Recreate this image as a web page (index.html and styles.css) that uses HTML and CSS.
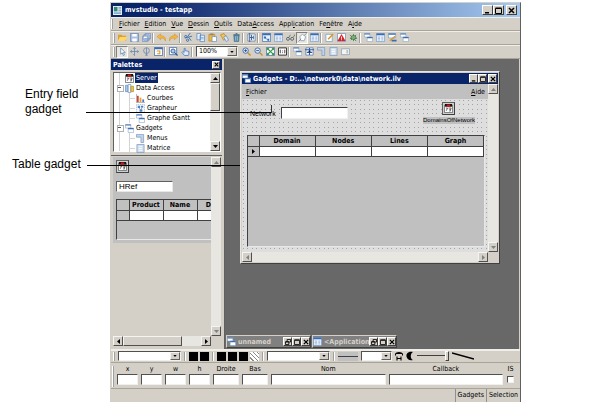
FILE: index.html
```html
<!DOCTYPE html>
<html lang="fr">
<head>
  <meta charset="UTF-8">
  <meta name="viewport" content="width=device-width, initial-scale=1.0">
  <title>mvstudio - testapp</title>
  <link rel="stylesheet" href="styles.css">
</head>
<body>

<!-- shared icons -->
<svg class="sprite" width="0" height="0" aria-hidden="true">
  <symbol id="up" viewBox="0 0 5 3"><path d="M0 3h5L2.500 0z"/></symbol>
  <symbol id="down" viewBox="0 0 5 3"><path d="M0 0h5L2.500 3z"/></symbol>
  <symbol id="left" viewBox="0 0 3 5"><path d="M3 0v5L0 2.500z"/></symbol>
  <symbol id="right" viewBox="0 0 3 5"><path d="M0 0v5l3-2.500z"/></symbol>
  <symbol id="min" viewBox="0 0 7 7"><path d="M1 5h4v1.500H1z"/></symbol>
  <symbol id="max" viewBox="0 0 7 7"><path fill="none" stroke="currentColor" d="M.5 1.500h6v5h-6zM.5 1h6"/></symbol>
  <symbol id="restore" viewBox="0 0 7 7"><path fill="none" stroke="currentColor" d="M2.500 2.500v-2h4v3h-2M.5 3.500h4v3h-4zM.5 3h4"/></symbol>
  <symbol id="close" viewBox="0 0 7 7"><path fill="none" stroke="currentColor" stroke-width="1.500" d="M1 1l5 5M6 1L1 6"/></symbol>
  <symbol id="form" viewBox="0 0 10 10"><path fill="#fff" stroke="#7d9cc4" stroke-width=".6" d="M.5.500h6v4h-6zM3.500 4.500h6v5h-6z"/><path fill="#3a6cb4" d="M.5.500h6v1.300h-6zM3.500 4.500h6v1.400h-6z"/></symbol>
  <symbol id="table" viewBox="0 0 10 10"><path fill="#e8f0fa" stroke="#6a94c8" stroke-width=".7" d="M.5.500h9v9h-9z"/><path fill="#3a6cb4" d="M.5.500h9v2h-9z"/><path stroke="#6a94c8" stroke-width=".6" d="M2 4.500h2.500M2 6h2.500M2 7.700h2.500M6 4.500h2M6 6h2M6 7.700h2"/></symbol>
  <symbol id="calendar" viewBox="0 0 10 10"><path fill="#fff" stroke="#555" stroke-width=".8" d="M.5 1.500h9v8h-9z"/><path fill="#111" d="M1 0h8v3H1z"/><path fill="#d01818" d="M3 .5h4V3H3z"/><path fill="none" stroke="#333" stroke-width=".8" d="M2 4.500h2l-1.500 3M5 4.500h3L6.500 8.500M5.500 6.500h2"/></symbol>
  <symbol id="folder" viewBox="0 0 10 10"><path fill="#e0a030" d="M0 2h4l1 1h4v6H0z"/><path fill="#ffd86a" d="M2 4.500h8L8 9H0z"/></symbol>
  <symbol id="save" viewBox="0 0 10 10"><path fill="#a8c0e4" stroke="#6484b8" stroke-width=".8" d="M.5.500h9v9h-9z"/><path fill="#fff" d="M2.500 1h5v3h-5zM2.500 6h5v3.500h-5z"/></symbol>
  <symbol id="saveall" viewBox="0 0 10 10"><path fill="#c8d8f0" stroke="#6484b8" stroke-width=".7" d="M3.500.500h6v6h-6zM2 2h6v6H2zM.5 3.500h6v6h-6z"/><path fill="#fff" d="M2 4h3v1.500H2z"/></symbol>
  <symbol id="undo" viewBox="0 0 10 10"><path fill="#f4b840" stroke="#c88820" stroke-width=".5" d="M0 4l4-3v2c4 0 6 2 5.500 6C8.500 6.500 7 5.500 4 5.500v2z"/></symbol>
  <symbol id="redo" viewBox="0 0 10 10"><path fill="#f4b840" stroke="#c88820" stroke-width=".5" d="M10 4L6 1v2C2 3 0 5 .5 9 1.500 6.500 3 5.500 6 5.500v2z"/></symbol>
  <symbol id="cut" viewBox="0 0 10 10"><path fill="none" stroke="#3c6cac" d="M1 5.500l8-2M4 4l3-4M5 4.500l3 4"/><circle cx="2" cy="4" r="1.300" fill="none" stroke="#3c6cac"/><circle cx="4" cy="8" r="1.300" fill="none" stroke="#3c6cac"/></symbol>
  <symbol id="copy" viewBox="0 0 10 10"><path fill="#e4eefa" stroke="#5884bc" stroke-width=".8" d="M1 .5h4v7H1zM4.500 2.500h5v7h-5z"/><path stroke="#5884bc" stroke-width=".6" d="M5.500 5h3M5.500 6.500h3"/></symbol>
  <symbol id="paste" viewBox="0 0 10 10"><path fill="#f0b840" stroke="#a07420" stroke-width=".6" d="M1 1.500h6.500v7.500H1z"/><path fill="#888" d="M2.500.500h3.500v2H2.500z"/><path fill="#fff" stroke="#5884bc" stroke-width=".7" d="M4.500 4h5v5.500h-5z"/></symbol>
  <symbol id="dup" viewBox="0 0 10 10"><path fill="#f4c450" stroke="#a07420" stroke-width=".6" d="M.5 2l4-1.500L8 6 4 8z"/><path fill="#dce8f8" stroke="#5884bc" stroke-width=".7" d="M4 4.500l3-1.500 2.500 5L7 9.500z"/></symbol>
  <symbol id="trash" viewBox="0 0 10 10"><path fill="#5c8ca8" stroke="#34647c" stroke-width=".6" d="M2 2.500h6L7.500 9.500h-5z"/><path stroke="#34647c" d="M1.500 2h7M4 .7h2"/><path stroke="#c8e0ec" stroke-width=".6" d="M4 3.500v5M6 3.500v5"/></symbol>
  <symbol id="tune" viewBox="0 0 10 10"><path fill="#f8f8f8" stroke="#5878a0" stroke-width=".8" d="M1 1h8v8H1z"/><path stroke="#345c94" d="M3 0v10M5 2v6M7 3v4M3 5h4"/></symbol>
  <symbol id="glasses" viewBox="0 0 10 10"><path fill="none" stroke="#666" stroke-width=".9" d="M3 5l2-3M8 5l2-3.500M4 6.500h1"/><circle cx="2.200" cy="6.500" r="1.600" fill="#d0e4ec" stroke="#555"/><circle cx="6.800" cy="6.500" r="1.600" fill="#d0e4ec" stroke="#555"/></symbol>
  <symbol id="edit" viewBox="0 0 10 10"><path fill="#fff" stroke="#7898c0" stroke-width=".8" d="M1 1.500h7v8H1z"/><path stroke="#d89820" stroke-width="1.600" d="M3.500 7l5.500-6"/></symbol>
  <symbol id="lasso" viewBox="0 0 10 10"><path fill="#fff" stroke="#8898a8" stroke-width=".9" d="M2 4l3-2.500L8.500 4 7 8.500H3z"/><path stroke="#6080a8" stroke-width=".9" d="M.5 9.500l3-3M7 2.500L9.500.500"/></symbol>
  <symbol id="warn" viewBox="0 0 10 10"><path fill="#fff" stroke="#6888b8" stroke-width=".8" d="M.5.500h9v9h-9z"/><path fill="#e02020" d="M5 1l4.500 8h-9z"/><path stroke="#fff" d="M5 4v2.500M5 7v1"/></symbol>
  <symbol id="bug" viewBox="0 0 10 10"><path stroke="#346c34" stroke-width=".8" d="M1 2l7 7M1 6h8M5 1v8M2 8l6-6"/><ellipse cx="5" cy="5" rx="2.800" ry="2.200" fill="#78b078" stroke="#286028" stroke-width=".6"/></symbol>
  <symbol id="pointer" viewBox="0 0 10 10"><path fill="#fff" stroke="#6080a8" stroke-width=".8" d="M3 1v7l1.700-1.500L6 9.500l1.200-.6-1.300-2.700H8z"/></symbol>
  <symbol id="move" viewBox="0 0 10 10"><path fill="none" stroke="#6888b0" stroke-width=".9" d="M5 .5v9M3.500 2L5 .5 6.500 2M.5 5h9M2 3.500L.5 5 2 6.500M8 3.500L9.500 5 8 6.500M3.500 8L5 9.500"/></symbol>
  <symbol id="rotate" viewBox="0 0 10 10"><path fill="none" stroke="#6888b0" stroke-width=".9" d="M5 1v8.500M3.500 9h3"/><circle cx="5" cy="4" r="3.200" fill="none" stroke="#6888b0" stroke-width=".9"/></symbol>
  <symbol id="swap" viewBox="0 0 10 10"><path fill="#fff" stroke="#4870a8" stroke-width=".9" d="M.5.500h9v9h-9z"/><path fill="#3a6cb4" d="M.5.500h9v2h-9z"/><path stroke="#d89820" stroke-width="1.200" fill="none" d="M3 4.500h3.500v3H3.500"/></symbol>
  <symbol id="formedit" viewBox="0 0 10 10"><path fill="#fff" stroke="#6a94c8" stroke-width=".7" d="M.5.500h8v5h-8z"/><path fill="#3a6cb4" d="M.5.500h8v1.500h-8zM4 7.500h5.500v2H4z"/><path stroke="#d89820" stroke-width="1.500" d="M2 8.500l6-5"/></symbol>
  <symbol id="zoomsel" viewBox="0 0 10 10"><path fill="#fff" stroke="#4870a8" stroke-width=".9" d="M.5.500h8v8h-8z"/><circle cx="4.500" cy="4.500" r="2.300" fill="#a8ccf0" stroke="#3058a0"/><path stroke="#3058a0" stroke-width="1.400" d="M6 6l3.500 3.500"/></symbol>
  <symbol id="hand" viewBox="0 0 10 10"><path fill="#dceafa" stroke="#3c6cb4" stroke-width=".8" d="M4 9.500L1 6l.8-.8L3.500 6V1.500h1.200V4l4 1v3L8 9.500z"/></symbol>
  <symbol id="zoomin" viewBox="0 0 10 10"><circle cx="4" cy="4" r="3" fill="#e0ecfa" stroke="#3c64a8"/><path stroke="#c89030" stroke-width="1.600" d="M6.500 6.500l3 3"/><path stroke="#24488c" d="M2.500 4h3M4 2.500v3"/></symbol>
  <symbol id="zoomout" viewBox="0 0 10 10"><circle cx="4" cy="4" r="3" fill="#e0ecfa" stroke="#3c64a8"/><path stroke="#c89030" stroke-width="1.600" d="M6.500 6.500l3 3"/><path stroke="#24488c" d="M2.500 4h3"/></symbol>
  <symbol id="fit" viewBox="0 0 10 10"><path fill="#fff" stroke="#3c64a8" stroke-width=".8" d="M.5.500h9v9h-9z"/><path stroke="#309848" stroke-width="1.300" d="M2 2l6 6M8 2L2 8"/><path fill="#309848" d="M1 1h3L1 4zM9 1v3L6 1zM1 9V6l3 3zM9 9H6l3-3z"/></symbol>
  <symbol id="one" viewBox="0 0 10 10"><path fill="#fff" stroke="#222" d="M.5 1h9v8h-9z"/><path stroke="#222" stroke-width=".9" d="M2.500 3v4M7.500 3v4M5 4v.8M5 6v.8"/></symbol>
  <symbol id="guides" viewBox="0 0 10 10"><path fill="#fff" stroke="#4870a8" stroke-width=".8" d="M1 1h8v8H1z"/><path stroke="#2c5ca8" stroke-width="1.200" d="M0 3h10M5 1v8M2 6h6"/><path fill="#222" d="M4 4h2v2H4z"/></symbol>
  <symbol id="corner" viewBox="0 0 10 10"><path fill="#c4d4e8" stroke="#7090b8" stroke-width=".7" d="M.5.500h8v9h-3v-6h-5z"/></symbol>
  <symbol id="grid" viewBox="0 0 10 10"><path fill="#d0dcec" stroke="#7898c0" stroke-width=".8" d="M1 .5h8v9H1z"/><path stroke="#fff" d="M3 3h4M3 5h4M3 7h4"/></symbol>
  <symbol id="panel" viewBox="0 0 10 10"><path fill="#f4f4f4" stroke="#8898b0" stroke-width=".8" d="M.5 2h9v6.500h-9z"/><path fill="#68a070" d="M6 4h2v1H6zM6 6h2v1H6z"/></symbol>
  <symbol id="chart" viewBox="0 0 10 10"><path fill="#d84030" d="M1 2h2v7H1z"/><path fill="#f0a030" d="M4 4h2v5H4z"/><path fill="#4878c8" d="M7 6h2v3H7z"/><path fill="none" stroke="#889" stroke-width=".7" d="M.5 0v9.500H10"/></symbol>
  <symbol id="graph" viewBox="0 0 10 10"><path fill="#f4f8fe" stroke="#7898c0" stroke-width=".7" stroke-dasharray="1" d="M.5.500h9v9h-9z"/><path fill="#4c80c0" d="M2 2h2.500v2.500H2zM5.500 2H8v2H5.500zM4 6h3v2.500H4z"/><path fill="none" stroke="#4c80c0" stroke-width=".7" d="M3 4l2.500 3L7 3"/></symbol>
  <symbol id="graphwin" viewBox="0 0 10 10"><path fill="#e8f0fa" stroke="#3a6cb4" stroke-width=".8" d="M.5.500h9v9h-9z"/><path fill="#3a6cb4" d="M.5.500h9v2h-9zM2 4h2.500v2H2zM6 6.500h2v2H6z"/><path fill="none" stroke="#3a6cb4" stroke-width=".7" d="M3 5l4 3"/></symbol>
  <symbol id="db" viewBox="0 0 10 10"><path fill="#a8c8e8" stroke="#5884bc" stroke-width=".7" d="M.5 1.500h3v7h-3z"/><path fill="#f8fcff" stroke="#5884bc" stroke-width=".7" d="M3.500.500h3v9h-3z"/><path fill="#e8c050" stroke="#a88428" stroke-width=".7" d="M6.500 2.500h3v6h-3z"/></symbol>
</svg>

<div class="figure">

  <div class="notes">
    <p class="note note-entry">Entry field<br>gadget</p>
    <p class="note note-table">Table gadget</p>
  </div>

  <div class="app">
    <div class="titlebar">
      <svg class="app-icon" viewBox="0 0 10 10"><path fill="#e8f0f0" d="M0 0h10v10H0z"/><path fill="#308878" d="M1 1h4v5H1z"/><path fill="#88b0d0" d="M6 1h3v2H6zM6 4h3v2H6zM1 7h8v2H1z"/></svg>
      <h1>mvstudio - testapp</h1>
      <div class="win-buttons">
        <button class="cap"><svg><use href="#min"/></svg></button>
        <button class="cap"><svg><use href="#max"/></svg></button>
        <button class="cap cap-close"><svg><use href="#close"/></svg></button>
      </div>
    </div>

    <nav class="menubar">
      <span class="grip"></span>
      <button><u>F</u>ichier</button>
      <button><u>E</u>dition</button>
      <button><u>V</u>ue</button>
      <button><u>D</u>essin</button>
      <button><u>O</u>utils</button>
      <button>Data<u>A</u>ccess</button>
      <button>Appl<u>i</u>cation</button>
      <button>Fe<u>n</u>être</button>
      <button>A<u>i</u>de</button>
    </nav>

    <div class="toolbar">
      <span class="grip"></span>
      <button class="tool"><svg><use href="#folder"/></svg></button>
      <button class="tool"><svg><use href="#save"/></svg></button>
      <button class="tool"><svg><use href="#saveall"/></svg></button>
      <span class="sep"></span>
      <button class="tool"><svg><use href="#undo"/></svg></button>
      <button class="tool"><svg><use href="#redo"/></svg></button>
      <span class="sep"></span>
      <button class="tool"><svg><use href="#cut"/></svg></button>
      <button class="tool"><svg><use href="#copy"/></svg></button>
      <button class="tool"><svg><use href="#paste"/></svg></button>
      <button class="tool"><svg><use href="#dup"/></svg></button>
      <button class="tool"><svg><use href="#trash"/></svg></button>
      <span class="sep"></span>
      <button class="tool"><svg><use href="#tune"/></svg></button>
      <span class="sep"></span>
      <button class="tool"><svg><use href="#graphwin"/></svg></button>
      <button class="tool"><svg><use href="#table"/></svg></button>
      <button class="tool"><svg><use href="#glasses"/></svg></button>
      <button class="tool pressed"><svg><use href="#lasso"/></svg></button>
      <button class="tool"><svg><use href="#table"/></svg></button>
      <span class="sep"></span>
      <button class="tool"><svg><use href="#edit"/></svg></button>
      <button class="tool"><svg><use href="#warn"/></svg></button>
      <button class="tool"><svg><use href="#bug"/></svg></button>
      <span class="sep"></span>
      <button class="tool"><svg><use href="#form"/></svg></button>
      <button class="tool"><svg><use href="#table"/></svg></button>
      <button class="tool"><svg><use href="#formedit"/></svg></button>
      <button class="tool"><svg><use href="#form"/></svg></button>
    </div>

    <div class="toolbar">
      <span class="grip"></span>
      <button class="tool pressed"><svg><use href="#pointer"/></svg></button>
      <button class="tool"><svg><use href="#move"/></svg></button>
      <button class="tool"><svg><use href="#rotate"/></svg></button>
      <button class="tool"><svg><use href="#swap"/></svg></button>
      <span class="sep"></span>
      <button class="tool"><svg><use href="#zoomsel"/></svg></button>
      <button class="tool"><svg><use href="#hand"/></svg></button>
      <span class="sep"></span>
      <span class="combo combo-zoom">
        <select aria-label="Zoom"><option>100%</option></select>
        <span class="drop"><svg><use href="#down"/></svg></span>
      </span>
      <button class="tool"><svg><use href="#zoomin"/></svg></button>
      <button class="tool"><svg><use href="#zoomout"/></svg></button>
      <button class="tool"><svg><use href="#fit"/></svg></button>
      <button class="tool"><svg><use href="#one"/></svg></button>
      <span class="sep"></span>
      <button class="tool"><svg><use href="#form"/></svg></button>
      <button class="tool"><svg><use href="#guides"/></svg></button>
      <button class="tool"><svg><use href="#corner"/></svg></button>
      <button class="tool"><svg><use href="#grid"/></svg></button>
      <button class="tool"><svg><use href="#panel"/></svg></button>
    </div>

    <div class="main">
      <div class="palettes">
        <div class="palettes-head">
          <h2>Palettes</h2>
          <button class="cap cap-small"><svg><use href="#close"/></svg></button>
        </div>

        <div class="tree-box">
          <ul class="tree">
            <li><svg class="node"><use href="#calendar"/></svg><span class="selected">Server</span></li>
            <li class="open"><svg class="node"><use href="#db"/></svg><span>Data Access</span></li>
            <li class="child"><svg class="node"><use href="#chart"/></svg><span>Courbes</span></li>
            <li class="child"><svg class="node"><use href="#graph"/></svg><span>Grapheur</span></li>
            <li class="child"><svg class="node"><use href="#form"/></svg><span>Graphe Gantt</span></li>
            <li class="open"><svg class="node"><use href="#form"/></svg><span>Gadgets</span></li>
            <li class="child"><svg class="node"><use href="#corner"/></svg><span>Menus</span></li>
            <li class="child"><svg class="node"><use href="#grid"/></svg><span>Matrice</span></li>
          </ul>
          <div class="vscroll">
            <button class="arrow"><svg class="vert"><use href="#up"/></svg></button>
            <span class="thumb"></span>
            <span class="track"></span>
            <button class="arrow"><svg class="vert"><use href="#down"/></svg></button>
          </div>
        </div>

        <div class="preview">
          <div class="preview-view">
            <div class="preview-page">
              <button class="gadget"><svg><use href="#calendar"/></svg></button>
              <input class="href" type="text" value="HRef" aria-label="HRef">
              <div class="grid-box">
                <table class="grid">
                  <tr><th class="col-head"></th><th class="col-name">Product</th><th class="col-name">Name</th><th class="col-last">D</th></tr>
                  <tr><th></th><td></td><td></td><td></td></tr>
                </table>
              </div>
            </div>
          </div>
          <div class="vscroll disabled">
            <button class="arrow"><svg class="vert"><use href="#up"/></svg></button>
            <span class="track"></span>
            <button class="arrow"><svg class="vert"><use href="#down"/></svg></button>
          </div>
          <div class="hscroll">
            <button class="arrow"><svg class="horiz"><use href="#left"/></svg></button>
            <span class="thumb"></span>
            <span class="track"></span>
            <button class="arrow"><svg class="horiz"><use href="#right"/></svg></button>
          </div>
        </div>
      </div>

      <div class="desktop">
        <div class="child-window">
          <div class="child-title">
            <svg class="node"><use href="#form"/></svg>
            <h2>Gadgets - D:...\network0\data\network.ilv</h2>
            <div class="win-buttons">
              <button class="cap cap-child"><svg><use href="#min"/></svg></button>
              <button class="cap cap-child"><svg><use href="#max"/></svg></button>
              <button class="cap cap-child cap-close"><svg><use href="#close"/></svg></button>
            </div>
          </div>
          <div class="child-body">
            <div class="child-view">
              <div class="child-menu">
                <button><u>F</u>ichier</button>
                <button><u>A</u>ide</button>
              </div>
              <div class="canvas">
                <div class="canvas-row">
                  <label for="network">Network</label>
                  <input id="network" type="text">
                  <div class="domains">
                    <button class="gadget"><svg><use href="#calendar"/></svg></button>
                    <span>DomainsOfNetwork</span>
                  </div>
                </div>
                <div class="grid-box canvas-grid">
                  <table class="grid">
                    <tr><th class="row-head"></th><th>Domain</th><th>Nodes</th><th>Lines</th><th>Graph</th></tr>
                    <tr><th class="row-head"><svg class="marker"><use href="#right"/></svg></th><td></td><td></td><td></td><td></td></tr>
                  </table>
                </div>
              </div>
            </div>
            <div class="vscroll disabled">
              <button class="arrow"><svg class="vert"><use href="#up"/></svg></button>
              <span class="track"></span>
              <button class="arrow"><svg class="vert"><use href="#down"/></svg></button>
            </div>
            <div class="hscroll disabled">
              <button class="arrow"><svg class="horiz"><use href="#left"/></svg></button>
              <span class="track"></span>
              <button class="arrow"><svg class="horiz"><use href="#right"/></svg></button>
            </div>
          </div>
        </div>

        <div class="minimized">
          <div class="mini">
            <svg class="node"><use href="#form"/></svg>
            <span class="mini-name">unnamed</span>
            <button class="cap cap-child"><svg><use href="#restore"/></svg></button>
            <button class="cap cap-child"><svg><use href="#max"/></svg></button>
            <button class="cap cap-child"><svg><use href="#close"/></svg></button>
          </div>
          <div class="mini">
            <svg class="node"><use href="#table"/></svg>
            <span class="mini-name">&lt;Application</span>
            <button class="cap cap-child"><svg><use href="#restore"/></svg></button>
            <button class="cap cap-child"><svg><use href="#max"/></svg></button>
            <button class="cap cap-child"><svg><use href="#close"/></svg></button>
          </div>
        </div>
      </div>
    </div>

    <!-- graphic attributes -->
    <div class="toolbar attributes">
      <span class="grip"></span>
      <span class="combo combo-wide">
        <select aria-label="Police"><option></option></select>
        <span class="drop"><svg><use href="#down"/></svg></span>
      </span>
      <span class="sep"></span>
      <div class="swatches">
        <button class="swatch"></button>
        <button class="swatch"></button>
      </div>
      <span class="sep"></span>
      <div class="swatches">
        <button class="swatch"></button>
        <button class="swatch"></button>
        <button class="swatch"></button>
        <button class="swatch hatch"></button>
      </div>
      <span class="sep"></span>
      <span class="combo combo-wide">
        <select aria-label="Motif"><option></option></select>
        <span class="drop"><svg><use href="#down"/></svg></span>
      </span>
      <span class="sep"></span>
      <button class="line-style"></button>
      <span class="combo combo-short">
        <select aria-label="Trait"><option></option></select>
        <span class="drop"><svg><use href="#down"/></svg></span>
      </span>
      <svg class="shape" viewBox="0 0 8 10"><path fill="none" stroke="#000" stroke-width="1.100" d="M.5 4.500V3C1.500 1 6.500 1 7.500 3v1.500M1 2.500h6M2 9.500V5.500M6 9.500V5.500M2 7.500h4"/></svg>
      <svg class="shape" viewBox="0 0 8 10"><path d="M7 1C2 0 0 3 .5 5.500 1 8.500 4 10 7 9 4 8 4 2.500 7 1z"/></svg>
      <input class="slider" type="range" value="100" aria-label="Alpha">
      <svg class="stroke" viewBox="0 0 22 10"><path stroke="#000" stroke-width="1.500" d="M0 2l22 6"/></svg>
    </div>

    <div class="props">
      <span class="grip"></span>
      <label class="num">x<input type="text"></label>
      <label class="num">y<input type="text"></label>
      <label class="num">w<input type="text"></label>
      <label class="num">h<input type="text"></label>
      <label class="side">Droite<input type="text"></label>
      <label class="side">Bas<input type="text"></label>
      <label class="long">Nom<input type="text"></label>
      <label class="long">Callback<input type="text"></label>
      <label class="check">IS<input type="checkbox"></label>
    </div>

    <div class="status">
      <span>Gadgets</span>
      <span>Selection</span>
    </div>
  </div>
</div>

</body>
</html>
```
FILE: styles.css
```css
* {
  margin: 0;
  padding: 0;
  box-sizing: border-box;
}
body {
  background: #fff;
  color: #000;
  font-family: "DejaVu Sans Condensed", "DejaVu Sans", sans-serif;
  font-size: 7px;
  line-height: 10px;
}
button, input, select {
  font: inherit;
  color: inherit;
  border: 0;
  border-radius: 0;
  background: none;
  min-width: 0;
  appearance: none;
}
svg {
  display: block;
  flex: none;
  fill: currentColor;
}
.sprite {
  position: absolute;
}
u {
  text-underline-offset: 1px;
  text-decoration-thickness: 1px;
}
h1, h2 {
  font-size: 7px;
  line-height: 10px;
  font-weight: bold;
  white-space: nowrap;
}
.figure {
  display: flex;
  min-height: 100vh;
  padding: 2px 83px 0 0;
}

/* captions on the left, with their leader lines */
.notes {
  flex: none;
  width: 110px;
  padding-top: 85px;
  font-family: "Liberation Sans", Arial, sans-serif;
  font-size: 12px;
  line-height: 15px;
}
.note {
  position: relative;
}
.note::after {
  content: "";
  position: absolute;
  z-index: 5;
  height: 1px;
  background: #000;
}
.note-entry {
  padding-left: 25px;
}
.note-entry::before {
  content: "";
  position: absolute;
  z-index: 5;
  left: 271px;
  top: 18px;
  width: 1px;
  height: 8px;
  background: #333;
}
.note-entry::after {
  left: 86px;
  top: 25px;
  width: 185px;
}
.note-table {
  margin-top: 40px;
  padding-left: 12px;
}
.note-table::after {
  left: 87px;
  top: 8px;
  width: 153px;
}

.app {
  flex: 1;
  min-width: 0;
  display: flex;
  flex-direction: column;
  background: #d4d0c8;
  border: 1px solid #d4d0c8;
  border-right-color: #606060;
  border-bottom: 0;
}
.titlebar {
  display: flex;
  align-items: center;
  gap: 3px;
  height: 14px;
  padding: 0 3px 0 2px;
  color: #fff;
  background: linear-gradient(90deg, #0a246a 10%, #a6caf0);
}
.app-icon {
  width: 9px;
  height: 9px;
}
.win-buttons {
  display: flex;
  margin-left: auto;
}
.cap {
  display: flex;
  align-items: center;
  justify-content: center;
  flex: none;
  width: 11px;
  height: 10px;
  color: #000;
  background: #d4d0c8;
  border: 1px solid;
  border-color: #fff #404040 #404040 #fff;
}
.cap svg {
  width: 7px;
  height: 7px;
}
.cap-close {
  margin-left: 2px;
}
.cap-small {
  width: 8px;
  height: 8px;
}
.cap-small svg {
  width: 5px;
  height: 5px;
}
.cap-child {
  width: 9px;
  height: 9px;
}
.cap-child svg {
  width: 6px;
  height: 6px;
}
.cap-child.cap-close {
  margin-left: 1px;
}

/* bars */
.menubar, .toolbar {
  display: flex;
  align-items: center;
  height: 14px;
  padding-left: 2px;
  border-bottom: 1px solid #a8a498;
  box-shadow: inset 0 1px #f0eee8;
}
.menubar {
  gap: 5px;
  padding-left: 0;
}
.grip {
  flex: none;
  align-self: stretch;
  width: 2px;
  margin: 2px 1px 1px 0;
  border-left: 1px solid #fff;
  border-right: 1px solid #a0a0a0;
}
.sep {
  flex: none;
  align-self: stretch;
  width: 2px;
  margin: 2px 1px 1px 0;
  border-left: 1px solid #a0a0a0;
  border-right: 1px solid #fff;
}
.tool {
  display: flex;
  align-items: center;
  justify-content: center;
  flex: none;
  width: 12px;
  height: 12px;
}
.tool svg {
  width: 9px;
  height: 9px;
}
.pressed {
  background: #e8e6e0;
  border: 1px solid;
  border-color: #808080 #fff #fff #808080;
}
.combo {
  display: flex;
  flex: none;
  height: 10px;
  background: #fff;
  border: 1px solid;
  border-color: #505050 #f0f0f0 #f0f0f0 #505050;
}
.combo select {
  flex: 1;
  height: 8px;
  padding-left: 2px;
  line-height: 8px;
}
.combo-zoom {
  width: 42px;
  height: 11px;
  margin: 0 2px;
}
.combo-zoom select {
  height: 9px;
  line-height: 9px;
}
.combo-wide {
  width: 63px;
}
.combo-short {
  width: 31px;
}
.drop {
  display: flex;
  align-items: center;
  justify-content: center;
  width: 10px;
  background: #d4d0c8;
  border: 1px solid;
  border-color: #f4f4f4 #606060 #606060 #f4f4f4;
}
.drop svg {
  width: 4px;
  height: 2px;
}

.main {
  flex: 1;
  display: flex;
}

/* palettes panel */
.palettes {
  flex: none;
  display: flex;
  flex-direction: column;
  width: 114px;
  padding-right: 2px;
  border-right: 1px solid #606060;
}
.palettes-head {
  display: flex;
  align-items: center;
  justify-content: space-between;
  height: 11px;
  padding: 0 2px;
  color: #fff;
  background: #0a246a;
}
.tree-box {
  display: flex;
  height: 80px;
  margin: 2px 1px 3px 2px;
  background: #fff;
  border: 1px solid;
  border-color: #606060 #fff #fff #606060;
}
.tree {
  flex: 1;
  display: flex;
  flex-direction: column;
  padding-left: 11px;
  list-style: none;
  background: linear-gradient(#d4d4d4, #d4d4d4) 5px 0 / 1px 100% no-repeat;
}
.tree li {
  position: relative;
  flex: 1;
  display: flex;
  align-items: center;
  gap: 1px;
  white-space: nowrap;
}
.tree .child {
  padding-left: 11px;
  background: linear-gradient(#d4d4d4, #d4d4d4) 4px 5px / 6px 1px no-repeat, linear-gradient(#d4d4d4, #d4d4d4) 4px 0 / 1px 100% no-repeat;
}
/* expander box over the guide line */
.open::before {
  content: "";
  position: absolute;
  left: -8px;
  top: 2px;
  width: 5px;
  height: 5px;
  background: linear-gradient(#555, #555) 0 1px / 3px 1px no-repeat content-box, #fff;
  border: 1px solid #b0b0b0;
}
.node {
  width: 9px;
  height: 9px;
}
.tree span {
  padding: 0 1px;
}
.tree .selected {
  color: #fff;
  background: #0a246a;
}

/* scroll bars */
.vscroll, .hscroll {
  display: flex;
  flex: none;
  background: #e8e6e1;
}
.vscroll {
  flex-direction: column;
  width: 10px;
}
.hscroll {
  height: 10px;
}
.arrow {
  display: flex;
  align-items: center;
  justify-content: center;
  flex: none;
  width: 10px;
  height: 10px;
}
.arrow, .thumb {
  background: #d4d0c8;
  border: 1px solid;
  border-color: #f4f4f4 #505050 #505050 #f4f4f4;
}
.vert {
  width: 5px;
  height: 3px;
}
.horiz {
  width: 3px;
  height: 5px;
}
.disabled .arrow {
  color: #808080;
}
.track {
  flex: 1;
}
.tree-box .thumb {
  height: 28px;
}

/* palette preview */
.preview {
  flex: 1;
  display: grid;
  grid-template-columns: 1fr 10px;
  grid-template-rows: 1fr 10px;
  padding: 1px 1px 3px 2px;
  border-top: 1px solid #606060;
}
.preview-view {
  min-width: 0;
}
.preview-page {
  height: 86px;
  padding: 3px 0 0 3px;
  background: #c0c0c0;
}
.gadget {
  display: flex;
  align-items: center;
  justify-content: center;
  width: 13px;
  height: 13px;
  background: #d0d0d0;
  border: 1px solid;
  border-color: #606060 #404040 #404040 #606060;
}
.gadget svg {
  width: 9px;
  height: 9px;
}
.href {
  display: block;
  width: 57px;
  height: 11px;
  margin: 8px 0 7px;
  padding-left: 2px;
  font-family: "Liberation Sans", Arial, sans-serif;
  font-size: 8px;
  background: #fff;
  border: 1px solid;
  border-color: #606060 #e8e8e8 #e8e8e8 #606060;
}
.preview .hscroll .thumb {
  width: 59px;
}

/* data grids */
.grid-box {
  background: #c0c0c0;
  border: 1px solid;
  border-color: #404040 #e8e8e8 #e8e8e8 #404040;
}
.preview-page .grid-box {
  height: 41px;
  border-right: 0;
}
.grid {
  width: 100%;
  table-layout: fixed;
  border-collapse: collapse;
}
.grid tr {
  height: 10px;
}
.grid th, .grid td {
  height: 10px;
  line-height: 8px;
  border-right: 1px solid #404040;
  border-bottom: 1px solid #404040;
}
.grid td {
  background: #fff;
}
.preview-page .grid th:last-child,
.preview-page .grid td:last-child {
  border-right: 0;
}
.col-head {
  width: 12px;
}
.col-name {
  width: 34px;
}
.grid .col-last {
  text-align: right;
}
.row-head {
  width: 11px;
}
.marker {
  width: 3px;
  height: 5px;
  margin: 0 auto;
}

/* MDI area */
.desktop {
  position: relative;
  flex: 1;
  margin-right: 1px;
  background: #686868;
}
.child-window {
  position: absolute;
  left: 15px;
  top: 12px;
  width: 260px;
  padding: 1px;
  background: #d4d0c8;
  border: 1px solid;
  border-color: #e8e6e0 #404040 #404040 #e8e6e0;
}
.child-title {
  display: flex;
  align-items: center;
  gap: 2px;
  height: 11px;
  padding: 0 1px 0 0;
  color: #fff;
  background: #0a246a;
}
.child-body {
  display: grid;
  grid-template-columns: 1fr 10px;
  grid-template-rows: 168px 10px;
}
.child-view {
  display: flex;
  flex-direction: column;
}
.child-menu {
  display: flex;
  justify-content: space-between;
  align-items: center;
  height: 15px;
  padding: 0 3px 0 4px;
  background: #c0c0c0;
}
/* alignment dots, 4px and 5px apart */
.canvas {
  flex: 1;
  display: flex;
  flex-direction: column;
  padding: 3px 3px 5px 5px;
  background:
    conic-gradient(from 270deg at 1px 1px, #a4a4a4 90deg, transparent 0) 1px 1px / 9px 9px,
    conic-gradient(from 270deg at 1px 1px, #a4a4a4 90deg, transparent 0) 5px 1px / 9px 9px,
    conic-gradient(from 270deg at 1px 1px, #a4a4a4 90deg, transparent 0) 1px 5px / 9px 9px,
    conic-gradient(from 270deg at 1px 1px, #a4a4a4 90deg, transparent 0) 5px 5px / 9px 9px,
    #dedede;
}
.canvas-row {
  display: flex;
  align-items: flex-start;
  height: 33px;
  padding: 0 10px 0 3px;
}
.canvas-row label {
  width: 31px;
  padding-top: 7px;
  font-family: "Liberation Sans", Arial, sans-serif;
}
.canvas-row input {
  width: 67px;
  height: 12px;
  margin-top: 5px;
  background: #fff;
  border: 1px solid;
  border-color: #404040 #f0f0f0 #f0f0f0 #404040;
}
.domains {
  display: flex;
  flex-direction: column;
  align-items: center;
  gap: 2px;
  margin-left: auto;
  font-family: "Liberation Sans", Arial, sans-serif;
  font-size: 6px;
  line-height: 7px;
}
.domains span {
  background: #c0c0c0;
}
.canvas-grid {
  flex: 1;
}

/* minimized windows */
.minimized {
  position: absolute;
  left: 1px;
  bottom: 1px;
  display: flex;
  gap: 1px;
}
.mini {
  display: flex;
  align-items: center;
  width: 85px;
  height: 13px;
  color: #d4d0c8;
  background: #808080;
  border: 1px solid;
  border-color: #d4d0c8 #404040 #404040 #d4d0c8;
}
.mini-name {
  flex: 1;
  min-width: 0;
  padding-left: 2px;
  font-weight: bold;
}

/* attribute bar */
.attributes {
  gap: 3px;
  border-top: 1px solid #f0eee8;
}
.attributes .grip, .attributes .sep, .props .grip {
  margin-right: 0;
}
.swatches {
  display: flex;
  gap: 2px;
}
.swatch {
  width: 9px;
  height: 9px;
  background: #000;
}
.hatch {
  background: repeating-linear-gradient(45deg, #fff 0 2px, #888 2px 3px);
}
.line-style {
  width: 20px;
  height: 9px;
  background: linear-gradient(#404040, #404040) 0 4px / 100% 1px no-repeat, #c0c0c0;
}
.shape {
  width: 8px;
  height: 10px;
}
.slider {
  width: 32px;
  height: 10px;
  background: linear-gradient(#404040, #404040) 0 4px / 100% 1px no-repeat;
}
.slider::-webkit-slider-thumb {
  appearance: none;
  width: 4px;
  height: 10px;
  background: #d4d0c8;
  border: 1px solid;
  border-color: #fff #404040 #404040 #fff;
}
.stroke {
  width: 22px;
  height: 10px;
}

/* object properties */
.props {
  display: flex;
  gap: 3px;
  height: 26px;
  padding: 1px 5px 0 1px;
  border-bottom: 1px solid #a8a498;
}
.props label {
  display: flex;
  flex-direction: column;
  align-items: center;
}
.props input {
  width: 100%;
  height: 11px;
  background: #fff;
  border: 1px solid;
  border-color: #505050 #f0f0f0 #f0f0f0 #505050;
}
.num {
  width: 21px;
}
.side {
  width: 26px;
}
.long {
  flex: 1;
}
.check {
  width: 9px;
}
.props .check input {
  width: 7px;
  height: 7px;
  margin-top: 2px;
}
.status {
  display: flex;
  justify-content: flex-end;
  height: 13px;
}
.status span {
  padding: 1px 2px 0;
  border-left: 1px solid #909090;
}
```
